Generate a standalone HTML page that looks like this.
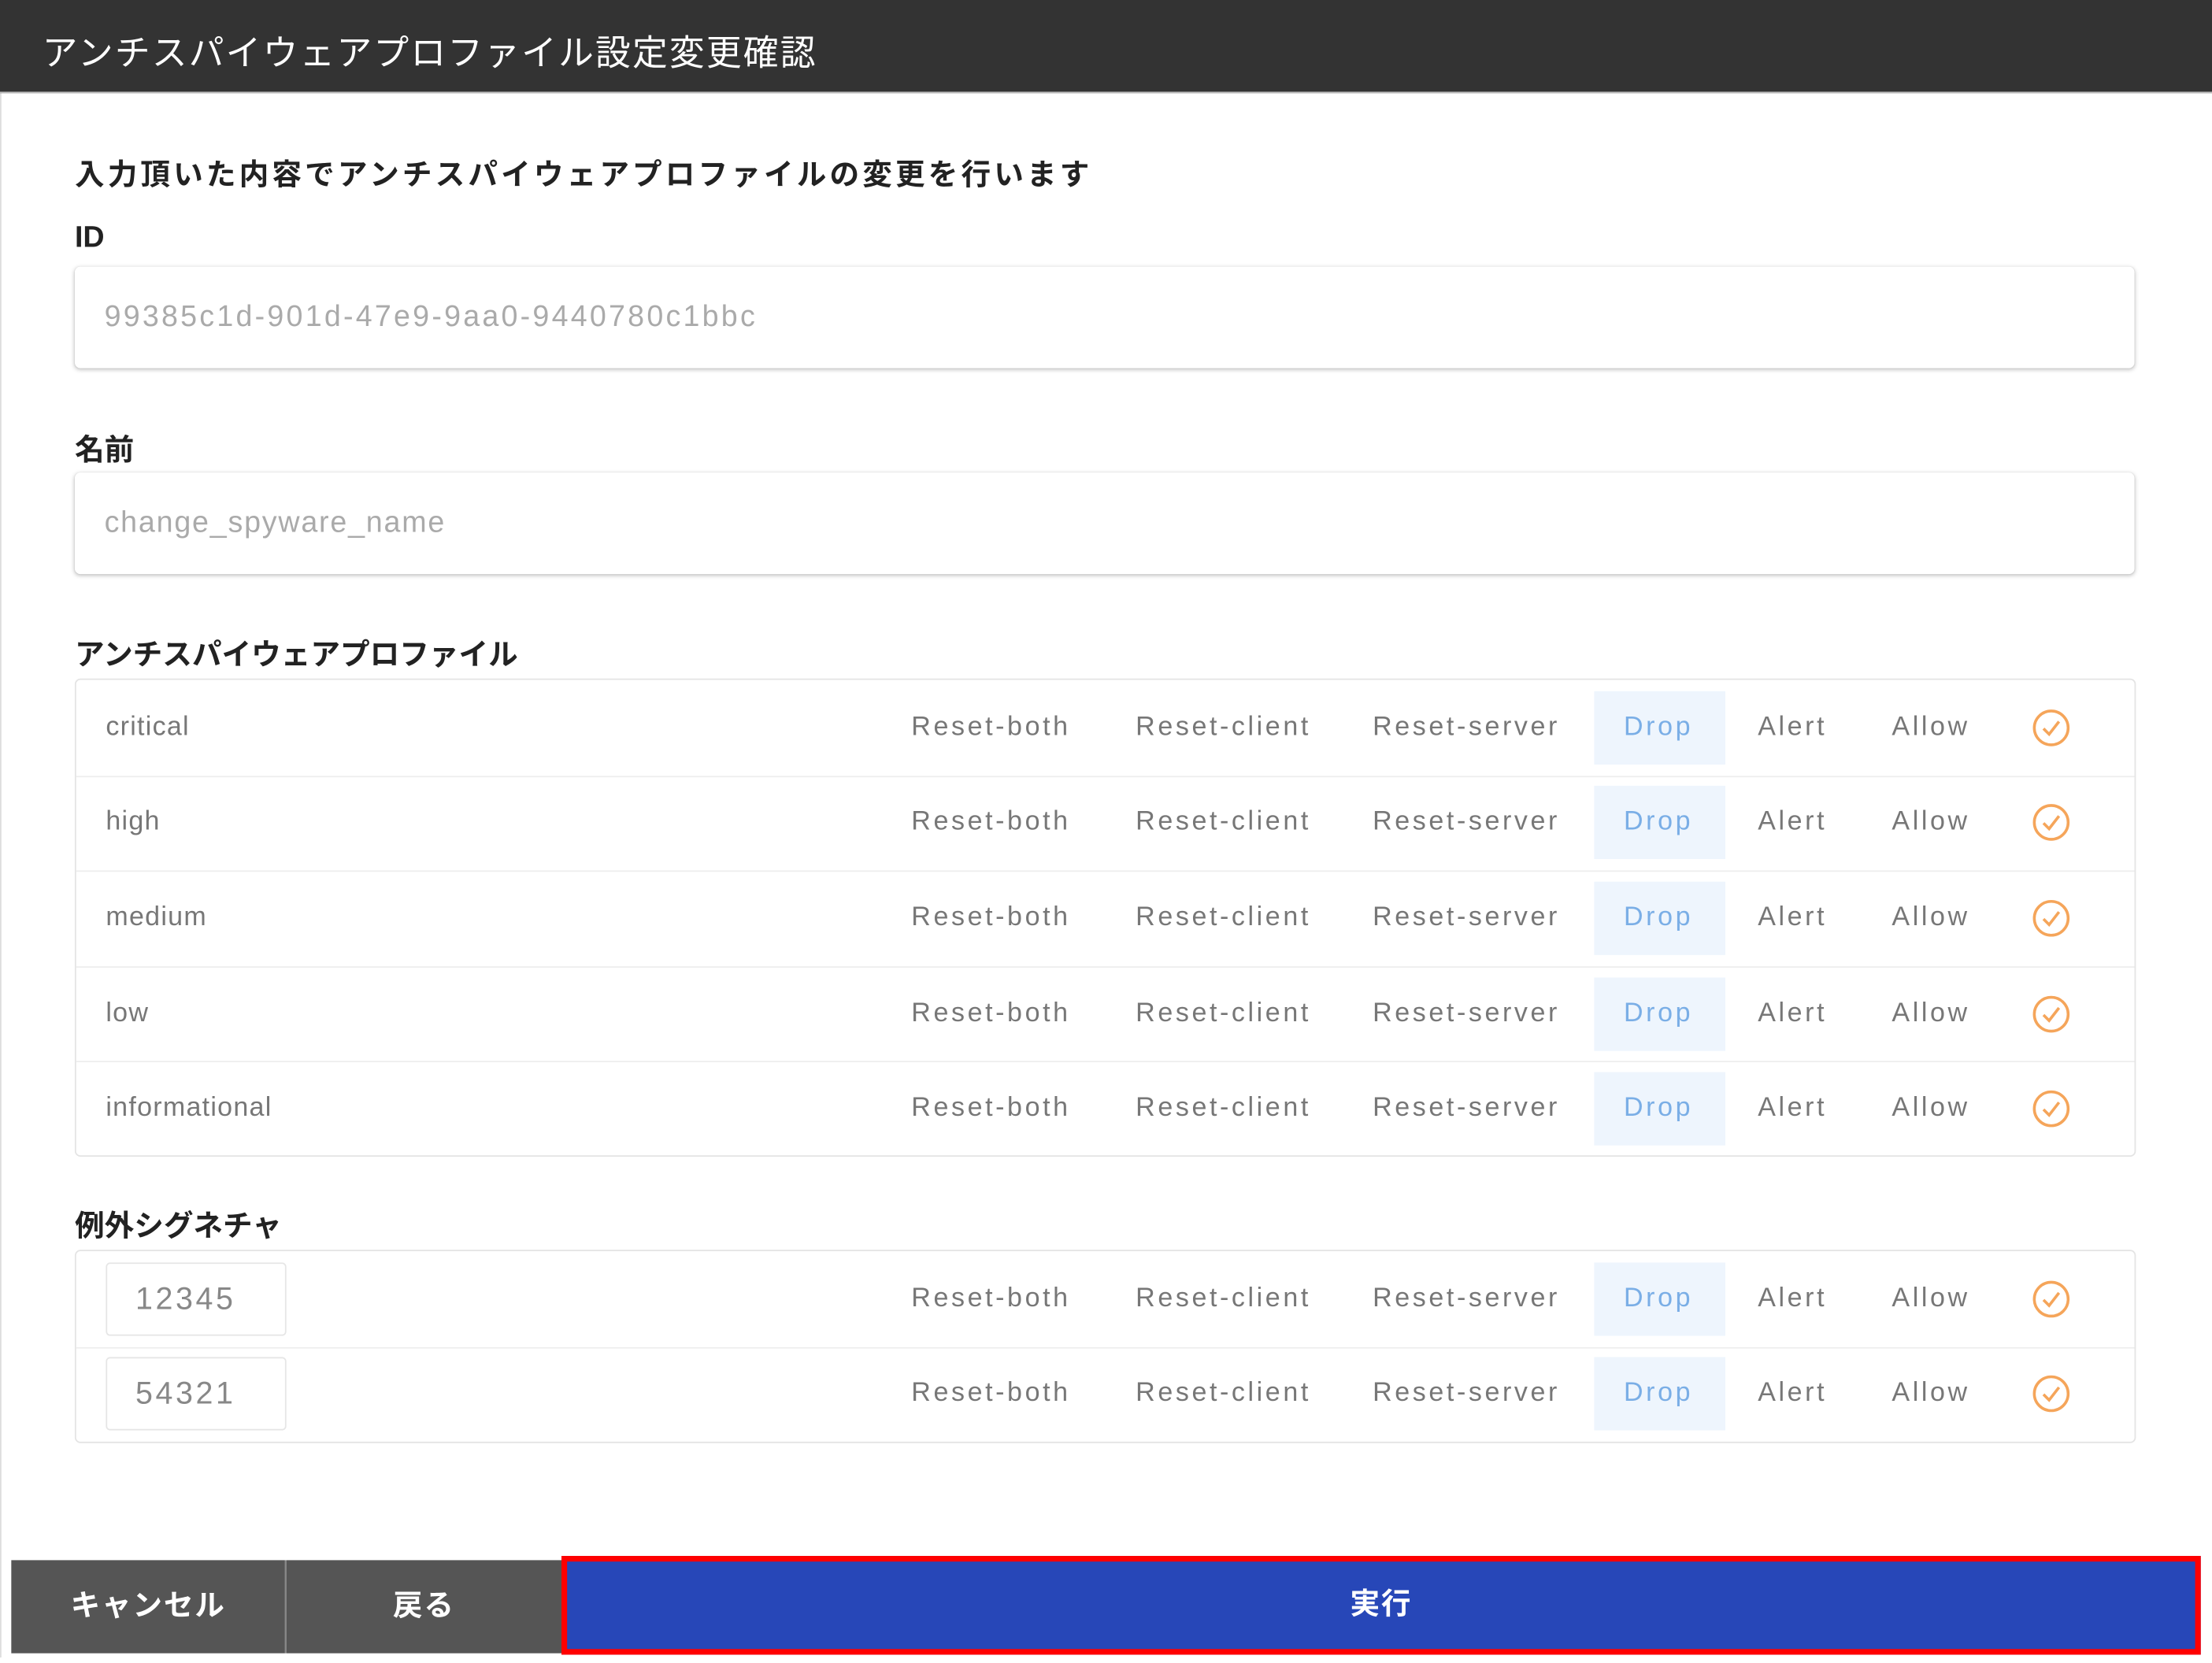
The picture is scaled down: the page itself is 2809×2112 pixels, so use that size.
<!DOCTYPE html>
<html><head><meta charset="utf-8"><style>
html,body{margin:0;padding:0;background:#fff;overflow:hidden;width:2809px;height:2112px}
#w{position:absolute;left:0;top:0;width:1568px;height:1179px;transform:scale(1.7915);transform-origin:0 0;font-family:"Liberation Sans","Noto Sans CJK JP",sans-serif}
.a{position:absolute}
.hd{left:0;top:0;width:1568px;height:65px;background:#333;border-bottom:1px solid #bbb}
.ttl{left:30px;top:18px;color:#fff;font-size:25px;white-space:nowrap;letter-spacing:1.2px}
.b{font-weight:bold;color:#222;font-size:21px;white-space:nowrap}
.inp{left:53px;width:1460px;height:72px;background:#fff;border-radius:4px;box-shadow:0 1px 3px rgba(0,0,0,.25),0 0 1px rgba(0,0,0,.08)}
.inp span{position:absolute;left:21px;top:24px;font-size:21px;color:#aaa;white-space:nowrap}
.tb{left:53px;width:1459px;border:1px solid #e4e4e4;border-radius:4px;background:#fff}
.row{position:absolute;left:0;width:1459px;border-bottom:1px solid #eee}
.row:last-child{border-bottom:none}
.row .t{position:absolute;font-size:19px;color:#777;letter-spacing:2px;white-space:nowrap}
.row .nm{left:21px;letter-spacing:0.7px}
.dp{position:absolute;left:1076px;width:93px;background:#eef5fd}
.chk{position:absolute;left:1386px}
.box{position:absolute;left:21px;width:126px;height:50px;border:1px solid #e6e6e6;border-radius:3px}
.box span{position:absolute;left:20px;top:12px;font-size:22px;color:#888;letter-spacing:2px}
.btn{top:1106px;height:66px;background:#555;color:#fff;font-weight:bold;font-size:21px;text-align:center;line-height:66px;letter-spacing:1px}
</style></head><body><div id="w">
<div class="a" style="left:0;top:65px;width:1px;height:1110px;background:#ddd"></div>
<div class="a hd"></div>
<div class="a ttl">アンチスパイウェアプロファイル設定変更確認</div>
<div class="a b" style="left:53px;top:108px;letter-spacing:2.3px">入力頂いた内容でアンチスパイウェアプロファイルの変更を行います</div>
<div class="a b" style="left:53px;top:157px">ID</div>
<div class="a inp" style="top:189px"><span style="letter-spacing:1.8px">99385c1d-901d-47e9-9aa0-9440780c1bbc</span></div>
<div class="a b" style="left:53px;top:303px">名前</div>
<div class="a inp" style="top:335px"><span style="letter-spacing:1px">change_spyware_name</span></div>
<div class="a b" style="left:53px;top:448px">アンチスパイウェアプロファイル</div>
<div class="a tb" style="top:481px;height:337px" id="t1"></div>
<div class="a b" style="left:53px;top:853px">例外シグネチャ</div>
<div class="a tb" style="top:886px;height:135px" id="t2"></div>
<div class="a btn" style="left:8px;width:194px">キャンセル</div>
<div class="a" style="left:202px;top:1106px;width:1px;height:66px;background:#888"></div>
<div class="a btn" style="left:203px;width:195px">戻る</div>
<div class="a btn" style="left:398px;top:1103px;width:1154px;height:62px;line-height:62px;background:#2747b8;border:4px solid #f00">実行</div>
</div>
<script>
function row(top,h,name,isBox){
 var s='<div class="row" style="top:'+top+'px;height:'+h+'px">';
 var c=h/2;
 s+='<div class="dp" style="top:'+(c-26)+'px;height:52px"></div>';
 if(isBox) s+='<div class="box" style="top:'+(c-26)+'px"><span>'+name+'</span></div>';
 else s+='<div class="t nm" style="top:'+(c-11)+'px">'+name+'</div>';
 var cols=[[592,'Reset-both'],[751,'Reset-client'],[919,'Reset-server'],[1097,'Drop'],[1192,'Alert'],[1287,'Allow']];
 cols.forEach(function(x){s+='<div class="t" style="left:'+x[0]+'px;top:'+(c-11)+'px;'+(x[1]=='Drop'?'color:#7aaee6':'')+'">'+x[1]+'</div>';});
 s+='<svg class="chk" style="top:'+(c-14)+'px" width="28" height="28" viewBox="0 0 28 28"><circle cx="14" cy="14" r="12" fill="none" stroke="#f5a55a" stroke-width="2"/><path d="M8.5 14.5l4 4 7-9" fill="none" stroke="#f5a55a" stroke-width="2"/></svg>';
 return s+'</div>';
}
var t1='',n=['critical','high','medium','low','informational'];
for(var i=0;i<5;i++)t1+=row(i*67.6,67.6,n[i],false);
document.getElementById('t1').innerHTML=t1;
document.getElementById('t2').innerHTML=row(0,67.5,'12345',true)+row(67.5,67.5,'54321',true);
</script>
</body></html>
